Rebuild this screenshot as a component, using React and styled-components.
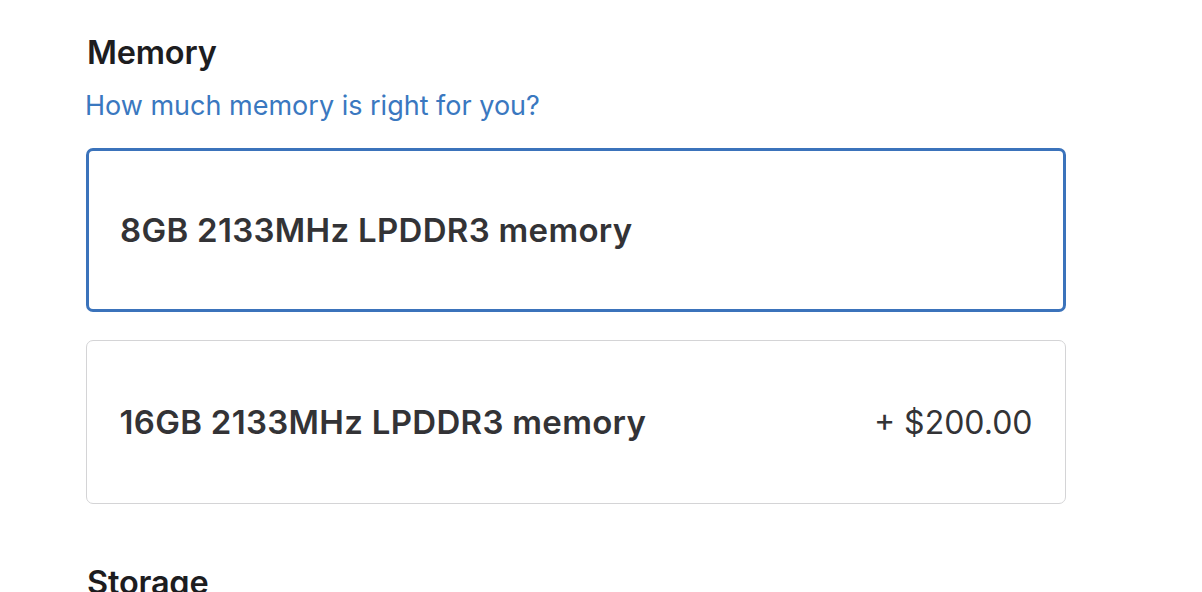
import React from "react";
import styled, { createGlobalStyle } from "styled-components";

const Global = createGlobalStyle`
  body {
    margin: 0;
    background: #ffffff;
    font-family: Inter, "Noto Sans", "Liberation Sans", sans-serif;
  }
`;

const Page = styled.main`
  padding: 33px 0 0 86px;
  width: 980px;
  height: 559px;
  overflow: hidden;
`;

const Section = styled.section`
  display: flex;
  flex-direction: column;
  margin-bottom: ${({ $gap }) => $gap || 0}px;
`;

const Heading = styled.h2`
  margin: 0 0 0 1px;
  font-size: 32.5px;
  line-height: 40px;
  font-weight: 600;
  color: #1d1d1f;
  letter-spacing: -0.2px;
`;

const HelpLink = styled.a`
  margin: 17px 0 26px -1px;
  font-size: 27px;
  line-height: 32px;
  color: #3a78c0;
  text-decoration: none;
`;

const Options = styled.div`
  display: flex;
  flex-direction: column;
  gap: 28px;
`;

const Option = styled.div`
  display: flex;
  align-items: center;
  justify-content: space-between;
  height: 164px;
  box-sizing: border-box;
  padding: 0 31px;
  border-radius: 7px;
  border: ${({ $selected }) =>
    $selected ? "3px solid #3b73bb" : "1.5px solid #d4d4d6"};
  ${({ $selected }) => ($selected ? "" : "padding: 0 32.5px;")}
`;

const Label = styled.span`
  font-size: 33px;
  font-weight: 600;
  color: #333336;
  letter-spacing: 0.3px;
`;

const Price = styled.span`
  font-size: 32px;
  font-weight: 400;
  color: #333336;
`;

const options = [
  { label: "8GB 2133MHz LPDDR3 memory", selected: true },
  { label: "16GB 2133MHz LPDDR3 memory", price: "+ $200.00" },
];

export default function App() {
  return (
    <>
      <Global />
      <Page>
        <Section $gap={59}>
          <Heading>Memory</Heading>
          <HelpLink href="#">How much memory is right for you?</HelpLink>
          <Options>
            {options.map((o) => (
              <Option key={o.label} $selected={o.selected}>
                <Label>{o.label}</Label>
                {o.price && <Price>{o.price}</Price>}
              </Option>
            ))}
          </Options>
        </Section>
        <Section>
          <Heading>Storage</Heading>
        </Section>
      </Page>
    </>
  );
}
